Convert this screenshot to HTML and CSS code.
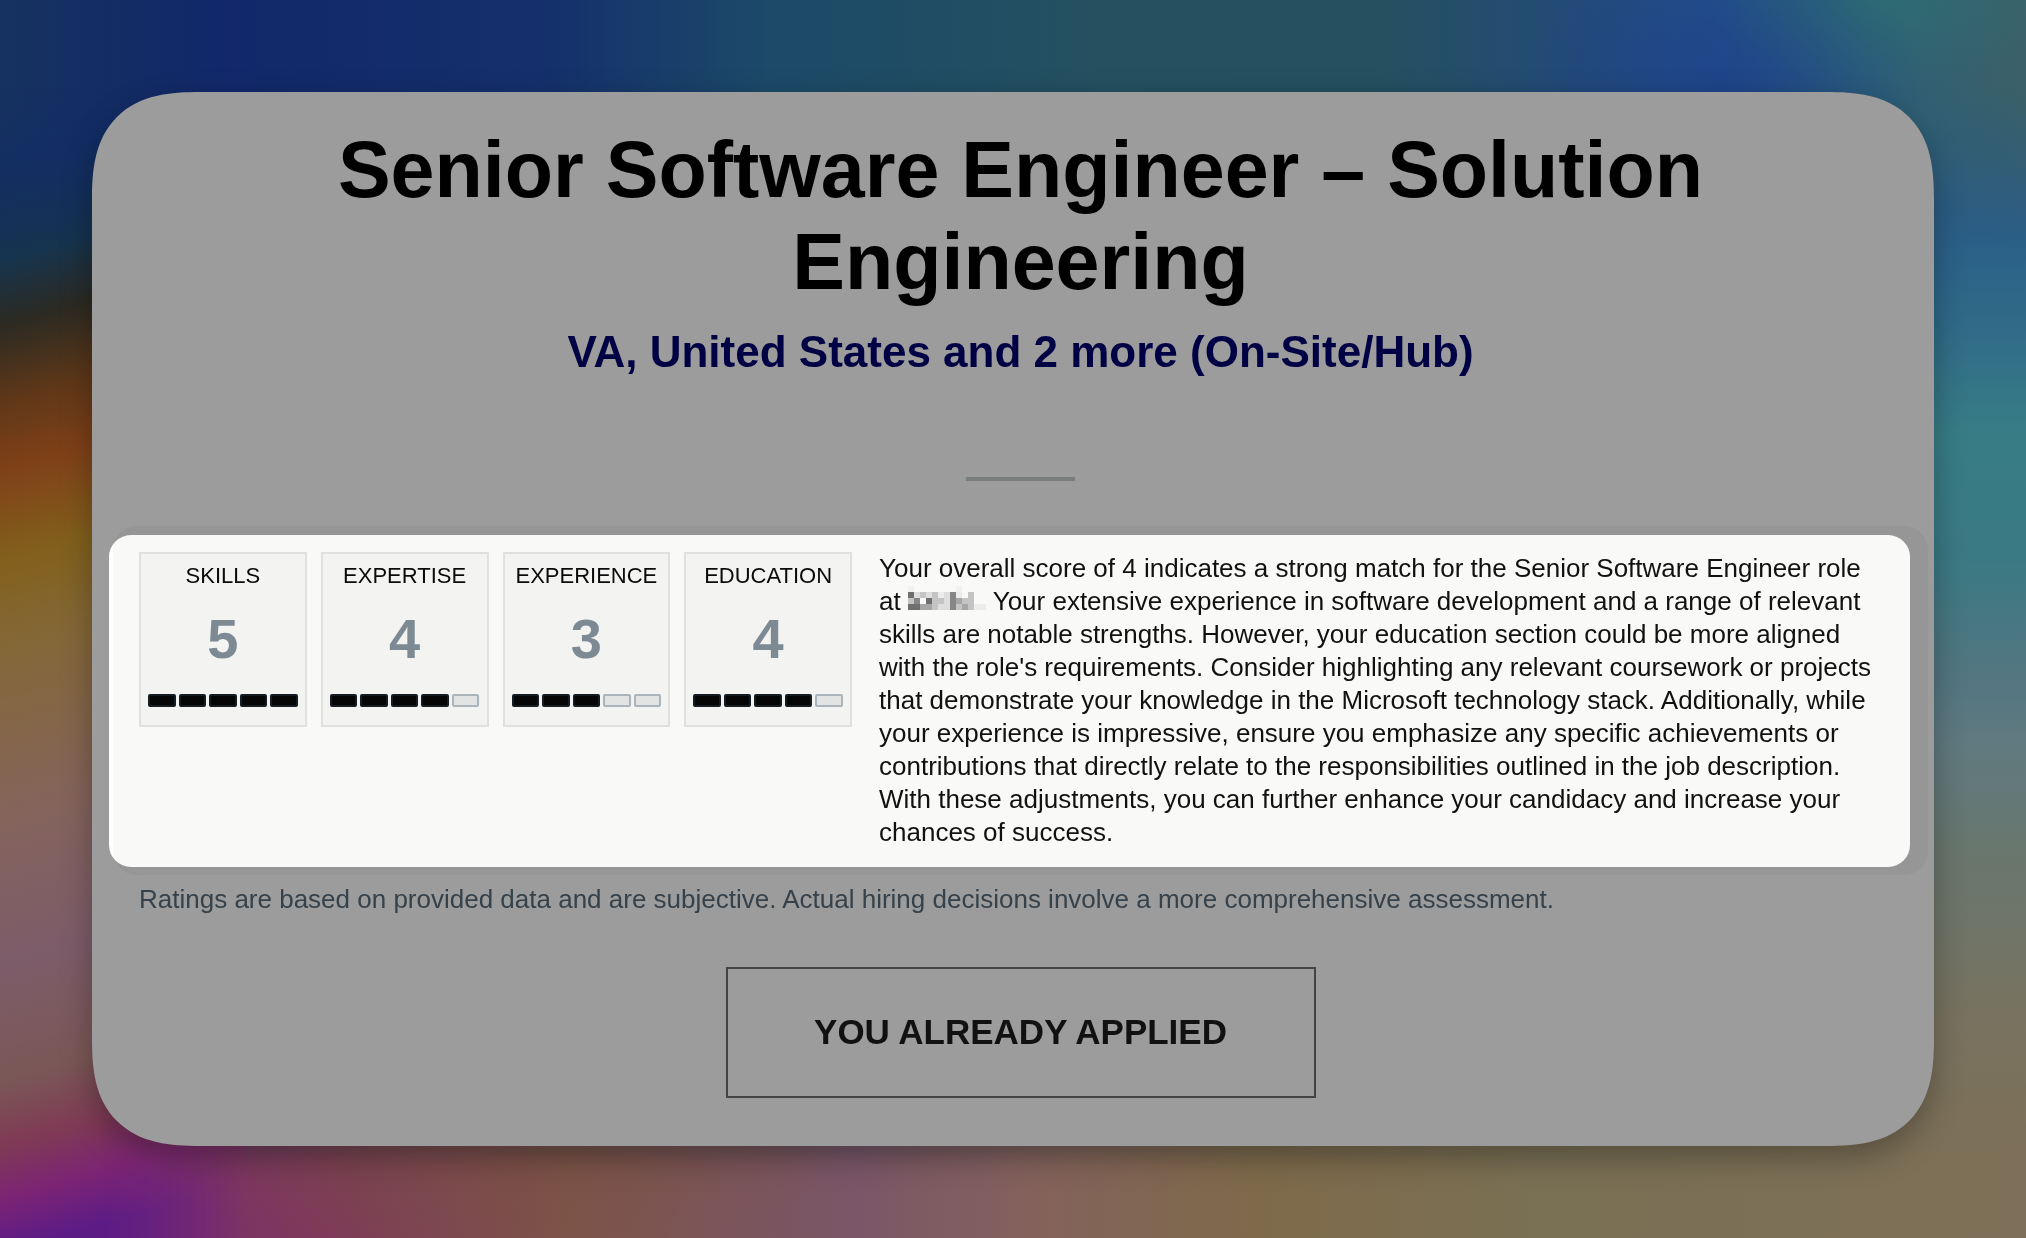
FILE: index.html
```html
<!DOCTYPE html>
<html lang="en">
<head>
    <meta charset="UTF-8">
    <meta name="viewport" content="width=device-width, initial-scale=1.0">
    <title>Senior Software Engineer – Solution Engineering</title>
    <link rel="stylesheet" href="styles.css">
</head>
<body>

<!-- Blurred wallpaper, one soft layer per side -->
<div class="wallpaper" aria-hidden="true">
    <div class="layer layer-left"></div>
    <div class="layer layer-right"></div>
    <div class="layer layer-top"></div>
    <div class="layer layer-bottom"></div>
    <div class="layer layer-spots"></div>
</div>

<main class="job-card">
    <h1>Senior Software Engineer – Solution Engineering</h1>
    <h2>VA, United States and 2 more (On-Site/Hub)</h2>
    <hr class="divider">

    <div class="ratings-wrap">
        <section class="ratings">
            <div class="scores">
                <div class="score">
                    <h3>SKILLS</h3>
                    <p class="value">5</p>
                    <div class="bars">
                        <span class="bar on"></span><span class="bar on"></span><span class="bar on"></span><span class="bar on"></span><span class="bar on"></span>
                    </div>
                </div>
                <div class="score">
                    <h3>EXPERTISE</h3>
                    <p class="value">4</p>
                    <div class="bars">
                        <span class="bar on"></span><span class="bar on"></span><span class="bar on"></span><span class="bar on"></span><span class="bar"></span>
                    </div>
                </div>
                <div class="score">
                    <h3>EXPERIENCE</h3>
                    <p class="value">3</p>
                    <div class="bars">
                        <span class="bar on"></span><span class="bar on"></span><span class="bar on"></span><span class="bar"></span><span class="bar"></span>
                    </div>
                </div>
                <div class="score">
                    <h3>EDUCATION</h3>
                    <p class="value">4</p>
                    <div class="bars">
                        <span class="bar on"></span><span class="bar on"></span><span class="bar on"></span><span class="bar on"></span><span class="bar"></span>
                    </div>
                </div>
            </div>
            <p class="feedback">Your overall score of 4 indicates a strong match for the Senior Software Engineer role at <svg class="redacted" viewBox="0 0 13 4" role="img" aria-label="Company name hidden" shape-rendering="crispEdges">
                <path fill="#f1f1f0" d="M0 0h1v1H0zM8 0h1v1H8z"/>
                <path fill="#dedede" d="M1 1h1v1H1zM3 1h1v1H3zM6 1h1v2H6zM5 3h2v1H5z"/>
                <path fill="#ececeb" d="M5 1h1v1H5zM8 1h1v1H8zM11 3h2v1H11z"/>
                <path fill="#c4c4c4" d="M2 1h1v1H2zM4 1h1v1H4zM10 1h1v3H10zM4 2h2v1H4zM4 3h1v1H4zM8 3h1v1H8zM9 2h1v1H9zM0 2h1v1H0z"/>
                <path fill="#a6a6a6" d="M2 3h2v1H2zM8 2h1v1H8zM9 3h1v1H9z"/>
                <path fill="#868686" d="M7 1h1v3H7zM1 2h1v1H1z"/>
                <path fill="#6f6f6f" d="M0 1h1v1H0zM0 3h2v1H0zM3 2h1v1H3z"/>
            </svg> Your extensive experience in software development and a range of relevant skills are notable strengths. However, your education section could be more aligned with the role's requirements. Consider highlighting any relevant coursework or projects that demonstrate your knowledge in the Microsoft technology stack. Additionally, while your experience is impressive, ensure you emphasize any specific achievements or contributions that directly relate to the responsibilities outlined in the job description. With these adjustments, you can further enhance your candidacy and increase your chances of success.</p>
        </section>
    </div>

    <p class="disclaimer">Ratings are based on provided data and are subjective. Actual hiring decisions involve a more comprehensive assessment.</p>
    <button type="button" class="applied-btn">YOU ALREADY APPLIED</button>
</main>

</body>
</html>
```
FILE: styles.css
```css
* {
    box-sizing: border-box;
}

body {
    font-family: "Liberation Sans", Arial, sans-serif;
    margin: 0;
    padding: 92px;
    min-height: 100vh;
    background-color: #3b4a5c;
}

h1, h2, h3, p {
    margin: 0;
}

/* Wallpaper */
.wallpaper {
    position: fixed;
    inset: 0;
    z-index: -1;
}

.layer {
    position: absolute;
    inset: 0;
}

.layer-left {
    width: 12%;
    background: linear-gradient(165deg, #15325f 0%, #122c66 12%, #16344e 20%, #2c2a22 25%, #603818 31%, #7f4018 36%, #82601c 43%, #846838 50%, #84645c 63%, #7d5c6a 74%, #7a5856 83%, #7f3a55 88%, #7c2474 92%, #5c1c86 96%);
}

.layer-right {
    background: linear-gradient(#3c6068 0%, #2a5c7c 8%, #2a5c88 17%, #2f6a88 26%, #387d86 35%, #3a7a84 45%, #547680 55%, #607a80 60%, #68776f 68%, #7a725e 84%, #7e7056 100%);
    -webkit-mask-image: linear-gradient(to right, transparent 30%, #000 90%);
    mask-image: linear-gradient(to right, transparent 30%, #000 90%);
}

.layer-top {
    background: linear-gradient(to right, #15325f 0%, #12286a 11%, #14306c 27%, #1c4a68 38%, #245060 54%, #24505f 68%, #234a78 78%, #224f8c 85%, #2c6078 92%, #3c6068 100%);
    -webkit-mask-image: linear-gradient(#000 7%, transparent 20%);
    mask-image: linear-gradient(#000 7%, transparent 20%);
}

.layer-bottom {
    background: linear-gradient(to right, #5e1c80 0%, #7c2878 5%, #7d3a58 16%, #7d5448 28%, #7a5668 42%, #84625c 51%, #7e6a4a 62%, #7a7054 76%, #7e7058 100%);
    -webkit-mask-image: linear-gradient(transparent 87%, #000 94%), linear-gradient(to right, transparent 5%, #000 12%);
    -webkit-mask-composite: source-in;
    mask-image: linear-gradient(transparent 87%, #000 94%), linear-gradient(to right, transparent 5%, #000 12%);
    mask-composite: intersect;
}

.layer-spots {
    background:
        radial-gradient(ellipse 10% 12% at 85% 7%, #1d4088b0, transparent),
        radial-gradient(ellipse 9% 7% at 93% 0%, #2e6e72c0, transparent),
        radial-gradient(ellipse 18% 9% at 24% 92%, #78504480, transparent);
}

/* Job card */
.job-card {
    display: flex;
    flex-direction: column;
    align-items: center;
    padding: 32px 32px 48px 47px;
    background-color: #9c9c9c;
    border-radius: 84px;
    box-shadow: 0 12px 32px rgba(0, 0, 0, 0.3);
}

@supports (corner-shape: superellipse(1.5)) {
    .job-card {
        border-radius: 108px;
        corner-shape: superellipse(1.4);
    }
}

h1 {
    font-size: 79px;
    line-height: 92px;
    color: #000;
    text-align: center;
}

h2 {
    margin-top: 19px;
    font-size: 44px;
    line-height: 50px;
    color: #000045;
    text-align: center;
}

.divider {
    width: 109px;
    height: 4px;
    margin: 100px 0 45px;
    border: none;
    background-color: #7a7e7c;
}

/* Ratings */
.ratings-wrap {
    align-self: stretch;
    margin: 0 -26px;
    padding: 9px 18px 8px 0;
    background-color: #969696;
    border-radius: 24px;
}

.ratings {
    display: grid;
    grid-template-columns: 713fr 1004fr;
    gap: 27px;
    align-items: start;
    margin-left: -4px;
    padding: 17px 27px 18px 30px;
    background: linear-gradient(to right, #fff 4px, #f9f9f8 4px);
    border-radius: 22px;
}

.scores {
    display: grid;
    grid-template-columns: repeat(4, 1fr);
    gap: 14px;
}

.score {
    padding: 9px 7px 18px;
    border: 2px solid #e0e0df;
    background-color: #f3f3f2;
    text-align: center;
}

.score h3 {
    font-size: 22px;
    font-weight: normal;
    line-height: 26px;
    color: #0a0a0a;
}

.score .value {
    margin: 22px 0 27px;
    font-size: 56px;
    font-weight: bold;
    line-height: 56px;
    color: #7d8a94;
}

.bars {
    display: flex;
    gap: 3px;
}

.bar {
    flex: 1;
    height: 13px;
    border: 2px solid #abb4ba;
    border-radius: 2px;
    background-color: #e2e4e4;
}

.bar.on {
    border-color: #151d22;
    background-color: #060606;
}

.feedback {
    font-size: 26px;
    line-height: 33px;
    color: #111;
}

.redacted {
    width: 78px;
    height: 24px;
    vertical-align: baseline;
}

.disclaimer {
    align-self: stretch;
    margin: 8px 0 51px;
    font-size: 26px;
    line-height: 33px;
    color: #36424b;
}

.applied-btn {
    width: 590px;
    max-width: 100%;
    padding: 42px 20px 44px;
    border: 2px solid #444;
    background: transparent;
    font-family: inherit;
    font-size: 35px;
    font-weight: bold;
    line-height: 41px;
    color: #111;
    cursor: pointer;
}
```
